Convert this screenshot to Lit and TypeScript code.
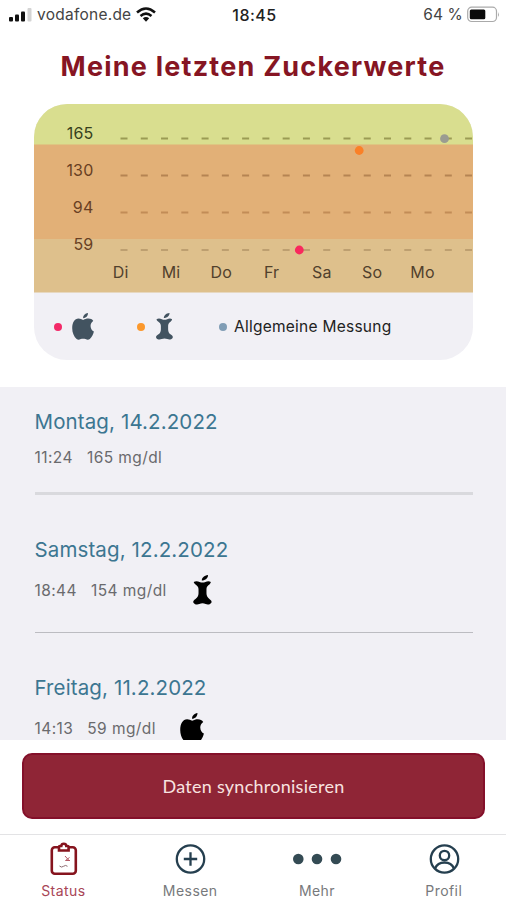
import { LitElement, html, css, svg, nothing } from "lit";
import { customElement, property } from "lit/decorators.js";

type FruitKind = "apple" | "core";

@customElement("fruit-icon")
class FruitIcon extends LitElement {
  @property() kind: FruitKind = "apple";
  static styles = css`
    :host { display: block; width: 22px; height: 27px; }
    svg { display: block; width: 100%; height: 100%; fill: currentColor; }
  `;
  render() {
    return html`<svg viewBox="0 0 22 27" preserveAspectRatio="none">
      ${this.kind === "apple"
        ? svg`<path d="M11 5.200C11 2.400 13 .4 16 0C16.100 3 13.800 5.200 11 5.200Z"/>
          <path d="M11.200 7C13 6.200 14.300 5.600 16.300 5.600C18.500 5.600 20.300 6.400 21.300 8C19.300 9.500 18.500 11.200 18.600 13.200C18.700 15.800 20 17.500 21.900 18.500C21.200 21.600 19.700 24.100 17.800 26C16.300 27.200 14.900 26.700 13.500 26.100C11.900 25.500 10.400 25.500 8.800 26.100C7.200 26.800 6 27.200 4.600 26C1.900 23.500 .2 19.600 .2 15.200C.2 9.500 2.700 5.800 6.500 5.600C8.300 5.600 9.700 6.400 11.200 7Z"/>`
        : svg`<path d="M10.300 5C10.300 2.500 12.500 .4 16.300 0C16.300 2.800 13.800 5 10.300 5Z"/>
          <path d="M2.600 6.300C4.300 5.100 6.600 5.500 8.200 6.200C10 6.900 12 6.900 13.800 6.200C15.500 5.500 17.300 5.100 19 6.200C18.700 7.700 17.600 8.400 16.600 9.200C15.300 10.200 14.800 11.400 14.800 13V16.400C14.800 18.600 15.800 20.300 17.600 21.600C19.200 22.700 20.200 23.600 19.500 24.900C18 26.700 15.800 26.900 14 26.100C12 25.300 10 25.300 8 26.100C6 26.900 3.800 26.700 2.300 24.900C1.700 23.500 2.800 22.600 4.300 21.600C6.200 20.300 7.200 18.600 7.200 16.400V13C7.200 11.400 6.600 10.200 5.200 9.200C4 8.400 2.900 7.700 2.600 6.300Z"/>`}
    </svg>`;
  }
}

interface Entry { date: string; time: string; value: string; fruit?: FruitKind; mod: string; }

const ENTRIES: Entry[] = [
  { date: "Montag, 14.2.2022", time: "11:24", value: "165 mg/dl", mod: "first" },
  { date: "Samstag, 12.2.2022", time: "18:44", value: "154 mg/dl", fruit: "core", mod: "second" },
  { date: "Freitag, 11.2.2022", time: "14:13", value: "59 mg/dl", fruit: "apple", mod: "third" },
];

const LEVELS = [
  { label: "165", y: 34.5 },
  { label: "130", y: 71.5 },
  { label: "94", y: 108.5 },
  { label: "59", y: 146 },
];
const DAYS = ["Di", "Mi", "Do", "Fr", "Sa", "So", "Mo"];

@customElement("app-root")
class AppRoot extends LitElement {
  static styles = css`
    :host {
      display: flex; flex-direction: column; height: 900px; width: 506px;
      background: #fff; overflow: hidden; color: #222;
      font-family: Inter, "Liberation Sans", sans-serif;
    }
    * { box-sizing: border-box; }
    svg { display: block; }
    .status { height: 29px; flex: none; display: grid; grid-template-columns: 1fr auto 1fr; align-items: center; padding: 0 6px 0 9px; font-size: 15.500px; color: #444; white-space: nowrap; }
    .carrier { display: flex; align-items: center; gap: 5px; letter-spacing: .250px; }
    .clock { font-weight: 500; font-size: 16px; color: #222; letter-spacing: .500px; }
    .power { display: flex; align-items: center; justify-content: flex-end; gap: 4px; letter-spacing: .150px; }
    h1 { margin: 0; height: 75px; flex: none; padding-top: 22px; line-height: 32px; text-align: center; font-size: 27px; font-weight: 700; letter-spacing: 1.220px; color: #861523; white-space: nowrap; }
    .card { flex: none; width: 439px; height: 256px; margin-left: 34px; border-radius: 33px; overflow: hidden; background: #f1f0f5; }
    .tick { font-size: 16px; letter-spacing: .200px; }
    .legend { height: 67px; display: flex; align-items: center; padding-left: 20px; font-size: 15.500px; color: #222; }
    .legend fruit-icon { color: #425360; }
    .dot { width: 8px; height: 8px; border-radius: 50%; flex: none; }
    .pink { background: #f32a68; } .orange { background: #fb982c; } .blue { background: #809db5; }
    .legend .apple { margin-left: 10px; } .legend .orange { margin-left: 43px; }
    .legend .core { margin-left: 9px; width: 21px; } .legend .blue { margin-left: 44px; }
    .legend span { margin-left: 7px; letter-spacing: .250px; white-space: nowrap; }
    .list { margin-top: 27px; flex: none; height: 353px; padding: 0 33px 0 34.500px; background: #f1f0f5; overflow: hidden; }
    .entry { border-bottom: 1px solid #bcbcc1; }
    .first { height: 108px; padding-top: 21px; border-bottom: 3px solid #d9d9dd; }
    .second { height: 138px; padding-top: 41px; }
    .third { height: 138px; padding-top: 41px; }
    h2 { margin: 0; font-size: 20.500px; line-height: 27px; font-weight: 400; letter-spacing: .120px; color: #3c7691; }
    .reading { display: flex; align-items: center; height: 30px; font-size: 15.500px; color: #6a6a6d; letter-spacing: .420px; }
    .reading span + span { margin-left: 14px; }
    .first .reading { margin-top: 7px; }
    .reading fruit-icon { margin-left: 24px; color: #000; height: 30px; width: 24px; }
    .second .reading fruit-icon { width: 23px; }
    .second .reading, .third .reading { margin-top: 12px; }
    .sync { flex: none; margin: 13px 21px 0 22px; height: 66px; border: 2px solid #84102a; border-radius: 10px; background: #8f2536; color: #f8e3e0; font: 400 18px Lato, sans-serif; letter-spacing: .260px; padding: 0; }
    nav { flex: none; margin-top: 15px; height: 66px; border-top: 1px solid #e3e3e5; display: grid; grid-template-columns: repeat(4, 126.800px); color: #77797c; font-size: 14px; letter-spacing: .450px; }
    .tab { display: flex; flex-direction: column; align-items: center; padding-top: 7px; }
    .tab svg { height: 34px; fill: none; stroke: #253f4f; stroke-width: 2.300; }
    .tab span { line-height: 18px; margin-top: 6px; }
    .active { color: #a84556; }
    .active svg { stroke: #86141e; stroke-width: 2.600; }
  `;

  private chart() {
    return html`<svg width="439" height="189" viewBox="0 0 439 189">
      <rect width="439" height="41" fill="#d9de8f"/>
      <rect y="40.500" width="439" height="95" fill="#e2b077"/>
      <rect y="135" width="439" height="53.500" fill="#dec08c"/>
      ${LEVELS.map((l, i) => svg`
        <text class="tick" x="59.500" y=${l.y} text-anchor="end" fill=${i === 0 ? "#37401c" : "#693f23"}>${l.label}</text>
        <line x1="86.500" x2="438" y1=${l.y} y2=${l.y} stroke=${["#9b9b54", "#b58453", "#c28c57", "#bd9f70"][i]} stroke-width="1.800" stroke-dasharray="7 13.270"/>`)}
      ${DAYS.map((d, i) => svg`<text class="tick" x=${86.7 + i * 50.3} y="174.300" text-anchor="middle" fill="#51402c">${d}</text>`)}
      <circle cx="265.300" cy="146" r="4.400" fill="#f9285d"/>
      <circle cx="325.200" cy="46.500" r="4.400" fill="#fa8027"/>
      <circle cx="410.500" cy="34.700" r="4.400" fill="#9a9c91"/>
    </svg>`;
  }

  render() {
    return html`
      <div class="status">
        <div class="carrier">
          <svg width="23" height="14" viewBox="0 0 23 14"><g fill="#111"><rect y="9" width="4" height="4.500" rx="1"/><rect x="6" y="6.500" width="4" height="7" rx="1"/><rect x="12" y="3.500" width="4" height="10" rx="1"/></g><rect x="18.500" y="0" width="4" height="13.500" rx="1" fill="#d4d4d4"/></svg>
          vodafone.de
          <svg width="20" height="15" viewBox="0 0 20 15"><g fill="none" stroke="#111" stroke-width="2.500"><path d="M1 5.500Q10-2.500 19 5.500"/><path d="M4.500 9Q10 4.300 15.500 9"/></g><path d="M6.800 11.300Q10 8.500 13.200 11.300L10 14.800Z" fill="#111"/></svg>
        </div>
        <div class="clock">18:45</div>
        <div class="power">64 %
          <svg width="33" height="17" viewBox="0 0 33 17"><rect x=".7" y="1.200" width="28.800" height="14.300" rx="4" fill="#fff" stroke="#aaa" stroke-width="1.200"/><rect x="2.800" y="3.500" width="15.500" height="9.700" rx="1.500" fill="#0a0a0a"/><path d="M31 6q1.500 2.500 0 5z" fill="#999"/></svg>
        </div>
      </div>
      <h1>Meine letzten Zuckerwerte</h1>
      <section class="card">
        ${this.chart()}
        <div class="legend">
          <i class="dot pink"></i><fruit-icon class="apple" kind="apple"></fruit-icon>
          <i class="dot orange"></i><fruit-icon class="core" kind="core"></fruit-icon>
          <i class="dot blue"></i><span>Allgemeine Messung</span>
        </div>
      </section>
      <section class="list">
        ${ENTRIES.map((e) => html`<article class="entry ${e.mod}">
          <h2>${e.date}</h2>
          <div class="reading"><span>${e.time}</span><span>${e.value}</span>${e.fruit ? html`<fruit-icon kind=${e.fruit}></fruit-icon>` : nothing}</div>
        </article>`)}
      </section>
      <button class="sync">Daten synchronisieren</button>
      <nav>
        <div class="tab active">
          <svg width="34" viewBox="0 0 34 34"><rect x="5.800" y="5.300" width="24" height="26.500" rx="3"/><path d="M13 8.500V5Q13 4 14 4H15.300Q15.500 1.800 17.800 1.800T20.300 4H21.600Q22.600 4 22.600 5V8.500Z" fill="#fff"/><path d="M19 14l4.500 5M19.500 18.500l4-3M19.500 18.500h4.500" stroke-width="1" stroke="#b45a66"/><path d="M13.500 24q2 2 4 .3t4 0" stroke-width="1" stroke="#8b6a70"/></svg>
          <span>Status</span>
        </div>
        <div class="tab">
          <svg width="34" viewBox="0 0 34 34"><circle cx="17.500" cy="17" r="13.700"/><path d="M17.500 10.300v13.400M10.800 17h13.400"/></svg>
          <span>Messen</span>
        </div>
        <div class="tab">
          <svg width="50" viewBox="0 0 50 34"><g fill="#344b54" stroke="none"><circle cx="6.300" cy="17" r="5.300"/><circle cx="25" cy="17" r="5.300"/><circle cx="44" cy="17" r="5.300"/></g></svg>
          <span>Mehr</span>
        </div>
        <div class="tab">
          <svg width="34" viewBox="0 0 34 34"><circle cx="17.500" cy="17" r="13.700"/><circle cx="17.500" cy="13.500" r="4.700"/><path d="M8 26.500Q10.500 20.500 17.500 20.500T27 26.500"/></svg>
          <span>Profil</span>
        </div>
      </nav>`;
  }
}
